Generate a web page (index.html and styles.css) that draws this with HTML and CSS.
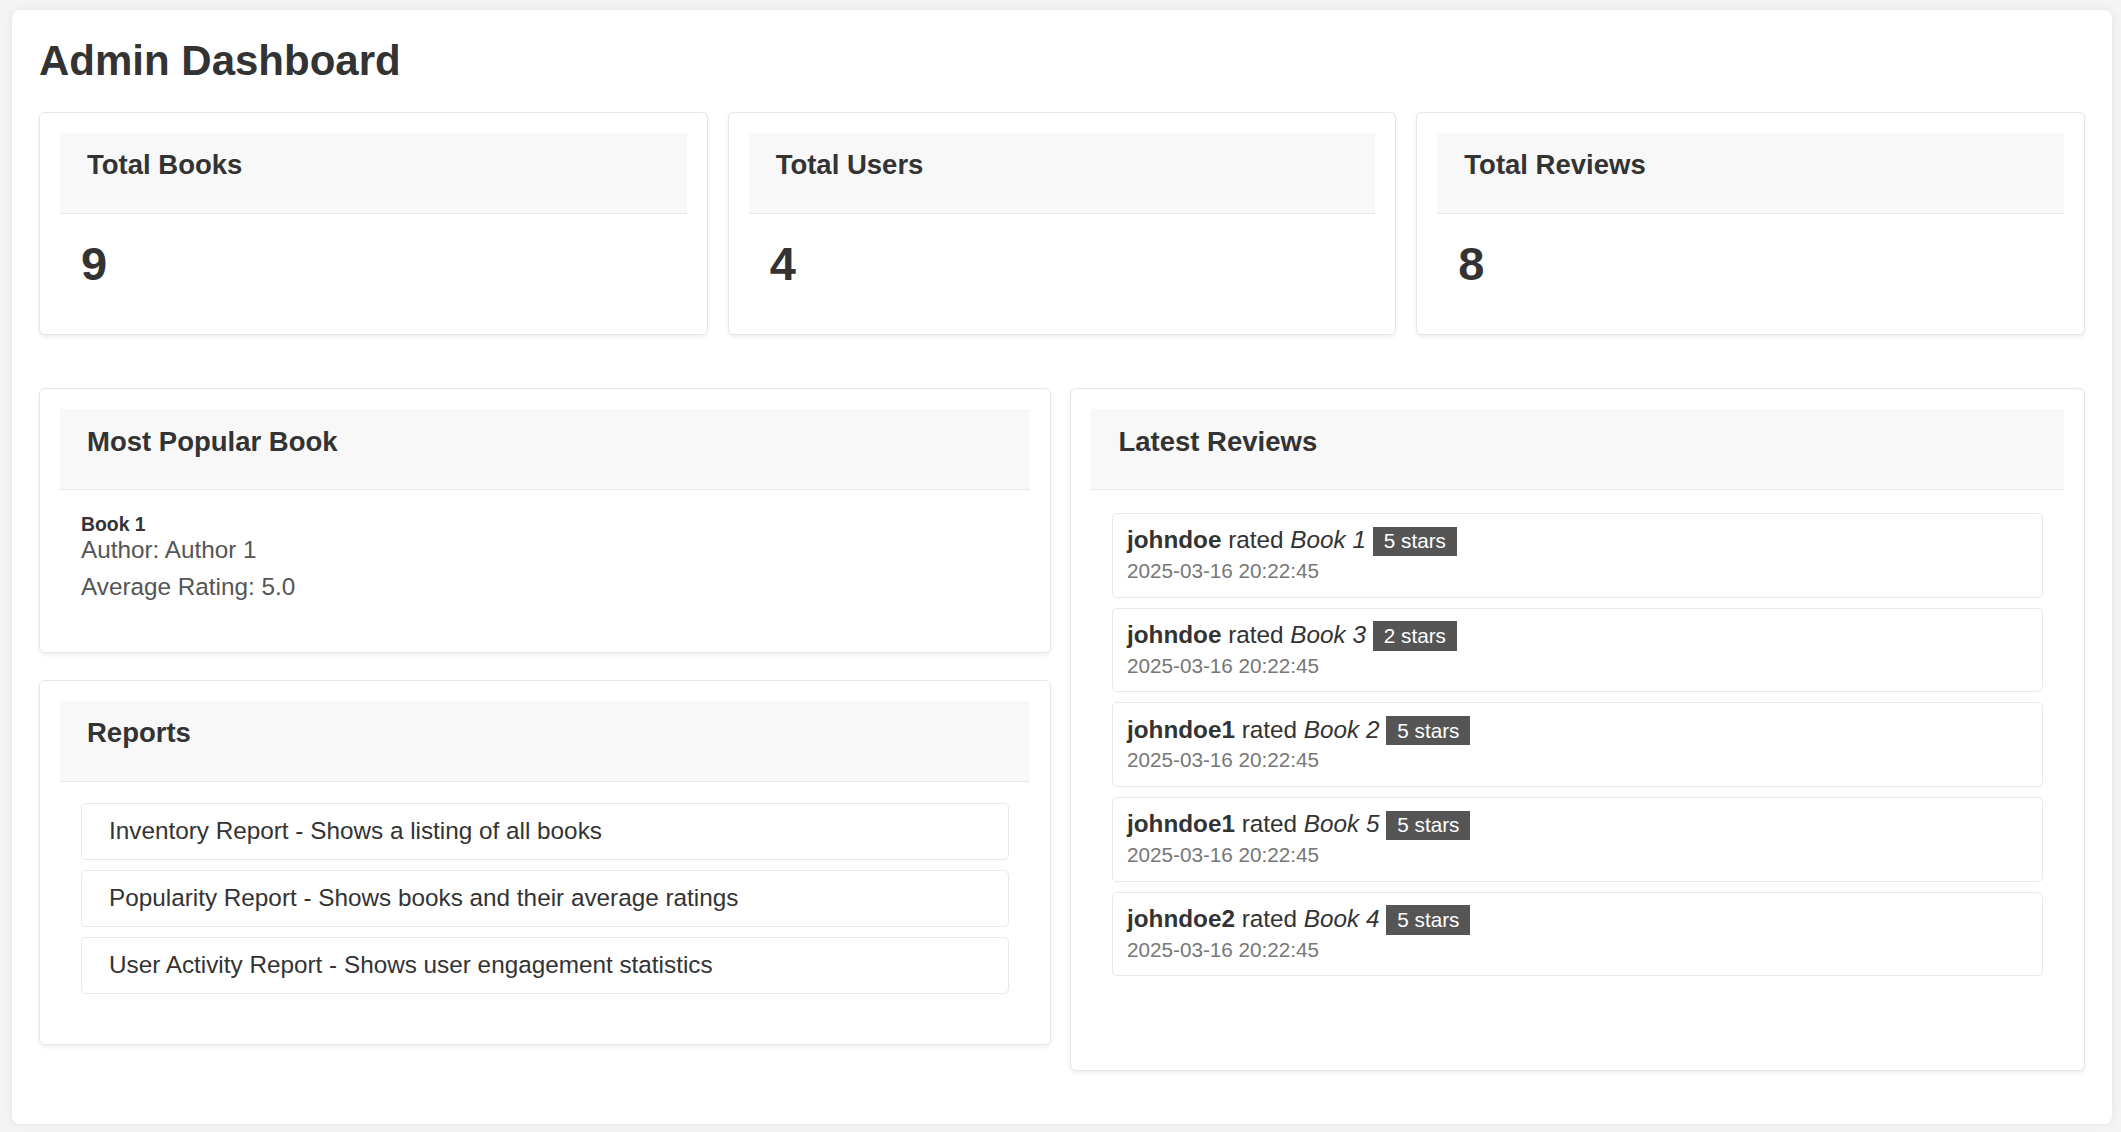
FILE: index.html
```html
<!DOCTYPE html>
<html lang="en">
<head>
<meta charset="utf-8">
<title>Admin Dashboard</title>
<link rel="stylesheet" href="styles.css">
</head>
<body>
<div class="container">
  <h1 class="page-title">Admin Dashboard</h1>

  <div class="stats">
    <div class="card">
      <div class="card-header"><h3>Total Books</h3></div>
      <div class="card-body stat-body"><div class="stat-number">9</div></div>
    </div>
    <div class="card">
      <div class="card-header"><h3>Total Users</h3></div>
      <div class="card-body stat-body"><div class="stat-number">4</div></div>
    </div>
    <div class="card">
      <div class="card-header"><h3>Total Reviews</h3></div>
      <div class="card-body stat-body"><div class="stat-number">8</div></div>
    </div>
  </div>

  <div class="lower">
    <div class="left-col">
      <div class="card">
        <div class="card-header"><h3>Most Popular Book</h3></div>
        <div class="card-body book-body">
          <div class="book-title">Book 1</div>
          <p class="book-author">Author: Author 1</p>
          <p class="book-rating">Average Rating: 5.0</p>
        </div>
      </div>

      <div class="card">
        <div class="card-header"><h3>Reports</h3></div>
        <div class="card-body reports-body">
          <ul class="report-list">
            <li class="report-item">Inventory Report - Shows a listing of all books</li>
            <li class="report-item">Popularity Report - Shows books and their average ratings</li>
            <li class="report-item">User Activity Report - Shows user engagement statistics</li>
          </ul>
        </div>
      </div>
    </div>

    <div class="card">
      <div class="card-header"><h3>Latest Reviews</h3></div>
      <div class="card-body reviews-body">
        <ul class="review-list">
          <li class="review-item"><strong>johndoe</strong> rated <em>Book 1</em> <span class="badge">5 stars</span><br><small class="review-date">2025-03-16 20:22:45</small></li>
          <li class="review-item"><strong>johndoe</strong> rated <em>Book 3</em> <span class="badge">2 stars</span><br><small class="review-date">2025-03-16 20:22:45</small></li>
          <li class="review-item"><strong>johndoe1</strong> rated <em>Book 2</em> <span class="badge">5 stars</span><br><small class="review-date">2025-03-16 20:22:45</small></li>
          <li class="review-item"><strong>johndoe1</strong> rated <em>Book 5</em> <span class="badge">5 stars</span><br><small class="review-date">2025-03-16 20:22:45</small></li>
          <li class="review-item"><strong>johndoe2</strong> rated <em>Book 4</em> <span class="badge">5 stars</span><br><small class="review-date">2025-03-16 20:22:45</small></li>
        </ul>
      </div>
    </div>
  </div>
</div>
</body>
</html>
```

FILE: styles.css
```css
* {
  box-sizing: border-box;
}

html, body {
  margin: 0;
}

body {
  background: #f4f4f4;
  padding: 10px 9px 8px 12px;
  font-family: "Liberation Sans", Arial, sans-serif;
  font-size: 24.3px;
  color: #333;
}

.container {
  background: #fff;
  border-radius: 8px;
  box-shadow: 0 0 8px rgba(0, 0, 0, 0.08);
  padding: 27px 27px 26px 27px;
  min-height: 1114px;
}

.page-title {
  margin: 0 0 27.7px 0;
  font-size: 42px;
  line-height: 47px;
  font-weight: bold;
  color: #333;
}

.stats {
  display: grid;
  grid-template-columns: repeat(3, 1fr);
  gap: 20px;
}

.card {
  background: #fff;
  border: 1px solid #e6e6e6;
  border-radius: 6px;
  box-shadow: 0 2px 4px rgba(0, 0, 0, 0.07);
  padding: 20px;
}

.card-header {
  background: #f8f8f8;
  border-bottom: 1px solid #e8e8e8;
  padding: 16.5px 27px 32px 27px;
}

.card-header h3 {
  margin: 0;
  font-size: 27.5px;
  line-height: 31.6px;
  font-weight: bold;
  color: #333;
}

.stat-body {
  padding: 23.5px 21px 23px 21px;
}

.stat-number {
  font-size: 47px;
  line-height: 54px;
  font-weight: bold;
  color: #333;
}

.lower {
  display: grid;
  grid-template-columns: 1012fr 1014fr;
  gap: 19px;
  margin-top: 53px;
  align-items: start;
}

.left-col {
  display: flex;
  flex-direction: column;
  gap: 27px;
}

.book-body {
  padding: 22.5px 21px 31px 21px;
}

.book-title {
  font-size: 19.4px;
  font-weight: bold;
  color: #333;
}

.book-author,
.book-rating {
  margin: 0;
  font-size: 24.3px;
  color: #555;
}

.book-rating {
  margin-top: 9px;
}

.reports-body {
  padding: 21px 21px 30px 21px;
}

.report-list,
.review-list {
  list-style: none;
  margin: 0;
  padding: 0;
  display: flex;
  flex-direction: column;
  gap: 10px;
}

.report-item {
  border: 1px solid #e8e8e8;
  border-radius: 5px;
  padding: 13.5px 27px;
  color: #333;
}

.reviews-body {
  padding: 22.5px 21px 73.5px 21px;
}

.review-item {
  border: 1px solid #e8e8e8;
  border-radius: 5px;
  padding: 12.5px 13.5px 12.5px 13.5px;
  color: #333;
}

.review-item strong {
  font-weight: bold;
}

.review-item em {
  font-style: italic;
}

.badge {
  display: inline-block;
  background: #555;
  color: #fff;
  font-size: 20.7px;
  padding: 2.7px 11px;
}

.review-date {
  font-size: 20.7px;
  color: #777;
}
```
